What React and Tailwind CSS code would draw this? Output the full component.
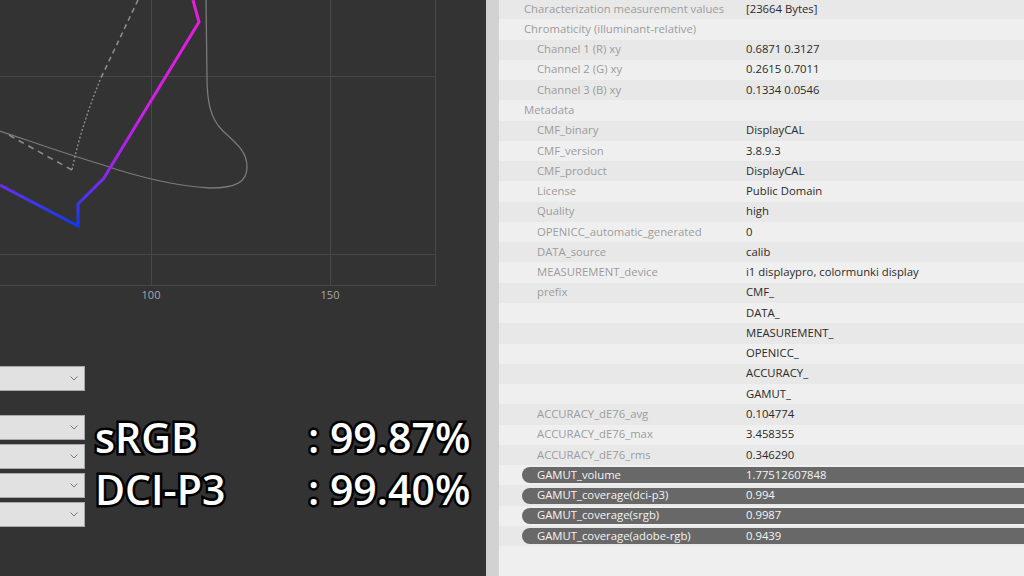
import React from "react";

const rows = [
  { label: "Characterization measurement values", value: "[23664 Bytes]", top: true },
  { label: "Chromaticity (illuminant-relative)", top: true },
  { label: "Channel 1 (R) xy", value: "0.6871 0.3127" },
  { label: "Channel 2 (G) xy", value: "0.2615 0.7011" },
  { label: "Channel 3 (B) xy", value: "0.1334 0.0546" },
  { label: "Metadata", top: true },
  { label: "CMF_binary", value: "DisplayCAL" },
  { label: "CMF_version", value: "3.8.9.3" },
  { label: "CMF_product", value: "DisplayCAL" },
  { label: "License", value: "Public Domain" },
  { label: "Quality", value: "high" },
  { label: "OPENICC_automatic_generated", value: "0" },
  { label: "DATA_source", value: "calib" },
  { label: "MEASUREMENT_device", value: "i1 displaypro, colormunki display" },
  { label: "prefix", value: "CMF_" },
  { label: "", value: "DATA_" },
  { label: "", value: "MEASUREMENT_" },
  { label: "", value: "OPENICC_" },
  { label: "", value: "ACCURACY_" },
  { label: "", value: "GAMUT_" },
  { label: "ACCURACY_dE76_avg", value: "0.104774" },
  { label: "ACCURACY_dE76_max", value: "3.458355" },
  { label: "ACCURACY_dE76_rms", value: "0.346290" },
  { label: "GAMUT_volume", value: "1.77512607848", hl: true },
  { label: "GAMUT_coverage(dci-p3)", value: "0.994", hl: true },
  { label: "GAMUT_coverage(srgb)", value: "0.9987", hl: true },
  { label: "GAMUT_coverage(adobe-rgb)", value: "0.9439", hl: true },
];

function Chart() {
  return (
    <svg width="486" height="310" viewBox="0 0 486 310" className="block">
      <defs>
        <linearGradient id="gamut" x1="0" y1="0" x2="0" y2="227" gradientUnits="userSpaceOnUse">
          <stop offset="0" stopColor="#e81cdc" />
          <stop offset="0.45" stopColor="#d21ee8" />
          <stop offset="0.74" stopColor="#9a22f0" />
          <stop offset="0.9" stopColor="#3a38f0" />
          <stop offset="1" stopColor="#1038ee" />
        </linearGradient>
      </defs>
      {/* grid */}
      <g stroke="#474747" strokeWidth="1" fill="none">
        <line x1="151.5" y1="0" x2="151.5" y2="285" />
        <line x1="330.5" y1="0" x2="330.5" y2="285" />
        <line x1="0" y1="76.5" x2="436" y2="76.5" />
        <line x1="0" y1="254.5" x2="436" y2="254.5" />
        <line x1="435.5" y1="0" x2="435.5" y2="285" />
        <line x1="0" y1="285.5" x2="436" y2="285.5" />
      </g>
      <text x="151" y="299" fill="#a8a8a8" fontSize="11" textAnchor="middle" fontFamily="'Open Sans', sans-serif">100</text>
      <text x="330" y="299" fill="#a8a8a8" fontSize="11" textAnchor="middle" fontFamily="'Open Sans', sans-serif">150</text>
      {/* spectral locus */}
      <path
        d="M206,0 L207,77 C207,100 210,118 222,130 C234,142 247,150 247,167 C247,182 236,188 210,188 C175,186 135,176 100,164 C60,152 30,141 0,131"
        fill="none"
        stroke="#7a7a7a"
        strokeWidth="1.3"
      />
      {/* reference gamut */}
      <path d="M138,0 L100,80" fill="none" stroke="#8c8c8c" strokeWidth="1.6" strokeDasharray="5 4" />
      <path d="M100,80 C88,110 78,140 72,170" fill="none" stroke="#8c8c8c" strokeWidth="1.4" strokeDasharray="2 2" />
      <path d="M72,170 L7,134" fill="none" stroke="#8c8c8c" strokeWidth="1.6" strokeDasharray="6 5" />
      {/* measured gamut */}
      <path
        d="M193,0 L199,22 L110,168 L104,178 L78,204 L78,226 L0,185"
        fill="none"
        stroke="url(#gamut)"
        strokeWidth="3"
        strokeLinejoin="miter"
      />
    </svg>
  );
}

function Combo() {
  return (
    <div className="h-[25px] w-[85px] bg-[#e1e1e1] border border-[#a9a9a9] border-l-0 flex items-center justify-end pr-[6px]">
      <svg width="8" height="5" viewBox="0 0 8 5">
        <polyline points="0.5,0.5 4,4 7.5,0.5" fill="none" stroke="#7a7a7a" strokeWidth="1" />
      </svg>
    </div>
  );
}

function Row({ row, index }) {
  const bg = index % 2 === 0 ? "bg-[#e8e8e8]" : "bg-[#efefef]";
  if (row.hl) {
    return (
      <div className={`h-[20.27px] flex items-center ${bg}`}>
        <div className="ml-[23px] flex-1 h-[16px] bg-[#686868] rounded-l-full flex items-center text-[#f4f4f4]">
          <div className="w-[224px] pl-[15px] whitespace-nowrap">{row.label}</div>
          <div className="whitespace-nowrap">{row.value}</div>
        </div>
      </div>
    );
  }
  return (
    <div className={`h-[20.27px] flex items-center ${bg}`}>
      <div
        className={`w-[247px] whitespace-nowrap text-[#9c9c9c] ${row.top ? "pl-[25px]" : "pl-[38px]"}`}
      >
        {row.label}
      </div>
      <div className="whitespace-nowrap text-[#2a2a2a]">{row.value}</div>
    </div>
  );
}

export default function App() {
  return (
    <div className="w-[1024px] h-[576px] overflow-hidden flex font-['Open_Sans',sans-serif]">
      {/* left dark panel */}
      <div className="w-[486px] h-full bg-[#333333] flex flex-col">
        <Chart />
        <div className="pt-[56px]">
          <Combo />
        </div>
        <div className="mt-[24px] flex">
          <div className="flex flex-col gap-[4px]">
            <Combo />
            <Combo />
            <Combo />
            <Combo />
          </div>
          <div className="ml-[10px] -mt-[4px] text-white font-semibold text-[41px] leading-[52px] [paint-order:stroke_fill] [-webkit-text-stroke:5px_#000]">
            <div className="flex">
              <div className="w-[213px]">sRGB</div>
              <div>: 99.87%</div>
            </div>
            <div className="flex">
              <div className="w-[213px]">DCI-P3</div>
              <div>: 99.40%</div>
            </div>
          </div>
        </div>
      </div>
      {/* splitter */}
      <div className="w-[13px] h-full bg-[#d2d2d2]" />
      {/* properties pane */}
      <div className="flex-1 h-full bg-[#efefef] text-[11.3px] overflow-hidden">
        <div className="-mt-px">
          {rows.map((row, i) => (
            <Row key={i} row={row} index={i} />
          ))}
        </div>
      </div>
    </div>
  );
}
